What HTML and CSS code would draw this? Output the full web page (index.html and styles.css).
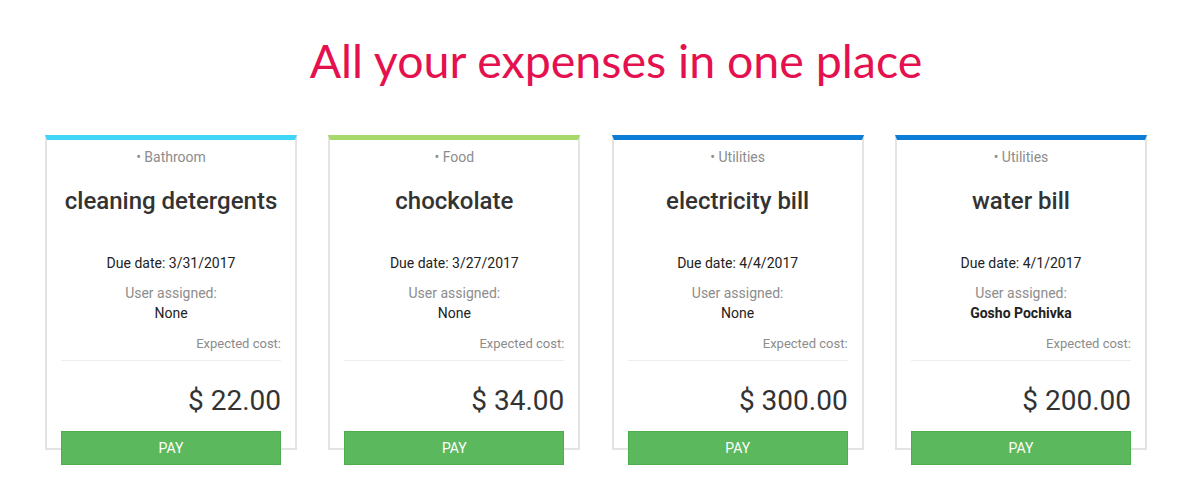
FILE: index.html
```html
<!DOCTYPE html>
<html lang="en">
<head>
<meta charset="utf-8">
<title>Expenses</title>
<link rel="stylesheet" href="styles.css">
</head>
<body>
<h1 class="headline">All your expenses in one place</h1>
<div class="cards">
  <div class="card">
    <div class="card-box card-cyan">
      <div class="cat">• Bathroom</div>
      <div class="name">cleaning detergents</div>
      <div class="due">Due date: 3/31/2017</div>
      <div class="label">User assigned:</div>
      <div class="user">None</div>
      <div class="cost-label">Expected cost:</div>
      <div class="price">$ 22.00</div>
    </div>
    <button class="pay">PAY</button>
  </div>
  <div class="card">
    <div class="card-box card-green">
      <div class="cat">• Food</div>
      <div class="name">chockolate</div>
      <div class="due">Due date: 3/27/2017</div>
      <div class="label">User assigned:</div>
      <div class="user">None</div>
      <div class="cost-label">Expected cost:</div>
      <div class="price">$ 34.00</div>
    </div>
    <button class="pay">PAY</button>
  </div>
  <div class="card">
    <div class="card-box card-blue">
      <div class="cat">• Utilities</div>
      <div class="name">electricity bill</div>
      <div class="due">Due date: 4/4/2017</div>
      <div class="label">User assigned:</div>
      <div class="user">None</div>
      <div class="cost-label">Expected cost:</div>
      <div class="price">$ 300.00</div>
    </div>
    <button class="pay">PAY</button>
  </div>
  <div class="card">
    <div class="card-box card-blue">
      <div class="cat">• Utilities</div>
      <div class="name">water bill</div>
      <div class="due">Due date: 4/1/2017</div>
      <div class="label">User assigned:</div>
      <div class="user user-set">Gosho Pochivka</div>
      <div class="cost-label">Expected cost:</div>
      <div class="price">$ 200.00</div>
    </div>
    <button class="pay">PAY</button>
  </div>
</div>
</body>
</html>
```
FILE: styles.css
```css
* { box-sizing: border-box; }
html, body { background: #fff; }
body {
  margin: 0;
  min-height: 500px;
  font-family: Roboto, "Liberation Sans", sans-serif;
  color: #333;
}
.headline {
  margin: 0;
  padding: 30px 0 0 32px;
  height: 135px;
  text-align: center;
  font-family: Lato, "Open Sans", sans-serif;
  font-weight: 400;
  font-size: 46.5px;
  line-height: 60px;
  color: #e5114f;
}
.cards {
  display: grid;
  grid-template-columns: repeat(4, 252px);
  column-gap: 31.33px;
  padding-left: 45px;
  align-items: start;
}
.card {
  display: flex;
  flex-direction: column;
}
.card-box {
  border: 2px solid #e3e3e3;
  border-top: 5px solid #3fd4f3;
  padding: 0 14px 29px;
  text-align: center;
}
.card-cyan { border-top-color: #3fd5f4; }
.card-green { border-top-color: #a6d868; }
.card-blue { border-top-color: #0b7dd7; }
.cat {
  margin-top: 7px;
  font-size: 14px;
  line-height: 20px;
  color: #8c8c8c;
}
.name {
  margin-top: 19px;
  font-size: 24px;
  line-height: 30px;
  font-weight: 500;
  color: #333;
}
.due {
  margin-top: 37px;
  font-size: 14px;
  line-height: 20px;
  color: #222;
}
.label {
  margin-top: 10px;
  font-size: 14px;
  line-height: 20px;
  color: #8c8c8c;
}
.user {
  font-size: 14px;
  line-height: 20px;
  color: #222;
}
.user-set { font-weight: 700; }
.cost-label {
  margin-top: 12px;
  padding-bottom: 8px;
  border-bottom: 1px solid #eeeeee;
  text-align: right;
  font-size: 13px;
  line-height: 17px;
  color: #8c8c8c;
}
.price {
  margin-top: 22px;
  text-align: right;
  font-size: 28px;
  line-height: 36px;
  color: #333;
}
.pay {
  display: block;
  margin: -19px 16px 0;
  height: 34px;
  background: #5cb85c;
  border: 1px solid #4cae4c;
  color: #fff;
  font-family: Roboto, "Liberation Sans", sans-serif;
  font-size: 14px;
  padding: 0;
  position: relative;
}
```
